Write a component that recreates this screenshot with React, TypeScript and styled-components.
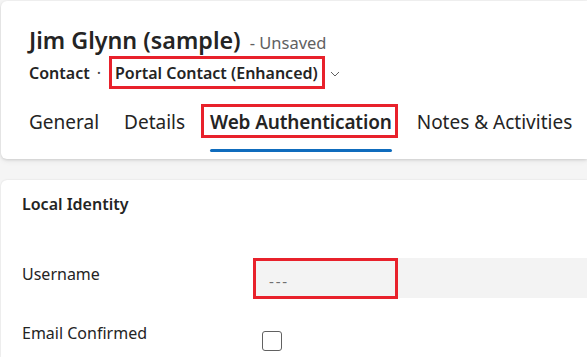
import React from 'react';
import styled, { createGlobalStyle } from 'styled-components';

const GlobalStyle = createGlobalStyle`
  html, body {
    margin: 0;
    padding: 0;
    background: #f5f5f5;
    font-family: "Noto Sans", "Open Sans", sans-serif;
    color: #242424;
    overflow: hidden;
  }
`;

const annotation = '#e8212b';

const Page = styled.div`
  width: 587px;
  height: 357px;
  padding: 1px 0 0 1px;
  box-sizing: border-box;
  display: flex;
  flex-direction: column;
  gap: 21px;
`;

const HeaderCard = styled.header`
  background: #fff;
  border-radius: 6px 0 0 6px;
  box-shadow: 0 1px 3px rgba(0, 0, 0, 0.13), 0 2px 6px rgba(0, 0, 0, 0.06);
  height: 158px;
  box-sizing: border-box;
  padding: 24px 0 0 28px;
  display: flex;
  flex-direction: column;
`;

const TitleRow = styled.div`
  display: flex;
  align-items: baseline;
  gap: 9px;
  white-space: nowrap;
`;

const Title = styled.h1`
  margin: 0;
  font-size: 23.3px;
  font-weight: 600;
  line-height: 30px;
`;

const Unsaved = styled.span`
  font-size: 16.5px;
  color: #616161;
`;

const SubRow = styled.div`
  display: flex;
  align-items: center;
  height: 33px;
  margin-top: 1px;
  font-size: 16px;
  white-space: nowrap;
`;

const EntityName = styled.span`
  font-weight: 600;
`;

const Dot = styled.span`
  margin: 0 8px 0 7px;
  color: #424242;
`;

const FormSelector = styled.span`
  display: inline-flex;
  align-items: center;
  height: 33px;
  box-sizing: border-box;
  padding: 0 4px 0 3px;
  border: 3px solid ${annotation};
  font-weight: 600;
`;

const Chevron = styled.svg`
  margin-left: 5px;
  margin-top: 2px;
`;

const Tabs = styled.nav`
  display: flex;
  gap: 25px;
  margin-top: 16px;
  white-space: nowrap;
`;

const Tab = styled.div<{ $active?: boolean }>`
  position: relative;
  font-size: 19px;
  line-height: 34px;
  font-weight: ${p => (p.$active ? 600 : 400)};
  letter-spacing: ${p => (p.$active ? '-0.15px' : '0')};
  padding-bottom: 12px;
  &::before {
    content: '';
    display: ${p => (p.$active ? 'block' : 'none')};
    position: absolute;
    left: -9px;
    right: -6px;
    top: -1px;
    height: 34px;
    border: 3px solid ${annotation};
    box-sizing: border-box;
  }
  &::after {
    content: '';
    display: ${p => (p.$active ? 'block' : 'none')};
    position: absolute;
    left: 0;
    right: 0;
    top: 44px;
    height: 3px;
    border-radius: 2px;
    background: #0f6cbd;
  }
`;

const SectionCard = styled.section`
  flex: 1;
  background: #fff;
  border-radius: 6px 0 0 0;
  box-shadow: 0 0 2px rgba(0, 0, 0, 0.12);
  padding: 14px 0 0 21px;
`;

const SectionTitle = styled.h2`
  margin: 0;
  font-size: 16px;
  font-weight: 600;
  line-height: 20px;
`;

const Fields = styled.div`
  display: grid;
  grid-template-columns: 231px 1fr;
  row-gap: 33px;
  margin-top: 44px;
  align-items: center;
`;

const Label = styled.div<{ $offset?: number }>`
  font-size: 16px;
  line-height: 22px;
  align-self: start;
  margin-top: ${p => p.$offset ?? 0}px;
`;

const InputField = styled.div`
  height: 40px;
  background: #f3f3f3;
  display: flex;
  align-items: center;
`;

const InputValue = styled.span`
  width: 145px;
  height: 41px;
  box-sizing: border-box;
  border: 3px solid ${annotation};
  padding: 6px 0 0 13px;
  display: flex;
  align-items: center;
  color: #707070;
  font-size: 15px;
  letter-spacing: 1.8px;
`;

const CheckBox = styled.span`
  display: block;
  width: 20px;
  height: 20px;
  box-sizing: border-box;
  border: 1px solid #616161;
  border-radius: 3px;
  margin-left: 9px;
`;

const App = () => (
  <>
    <GlobalStyle />
    <Page>
      <HeaderCard>
        <TitleRow>
          <Title>Jim Glynn (sample)</Title>
          <Unsaved>- Unsaved</Unsaved>
        </TitleRow>
        <SubRow>
          <EntityName>Contact</EntityName>
          <Dot>·</Dot>
          <FormSelector>Portal Contact (Enhanced)</FormSelector>
          <Chevron width="10" height="6" viewBox="0 0 10 6">
            <path d="M1 1l4 4 4-4" fill="none" stroke="#616161" strokeWidth="1" />
          </Chevron>
        </SubRow>
        <Tabs>
          <Tab>General</Tab>
          <Tab>Details</Tab>
          <Tab $active>Web Authentication</Tab>
          <Tab>Notes &amp; Activities</Tab>
        </Tabs>
      </HeaderCard>
      <SectionCard>
        <SectionTitle>Local Identity</SectionTitle>
        <Fields>
          <Label $offset={5}>Username</Label>
          <InputField>
            <InputValue>---</InputValue>
          </InputField>
          <Label $offset={-9}>Email Confirmed</Label>
          <CheckBox />
        </Fields>
      </SectionCard>
    </Page>
  </>
);

export default App;
